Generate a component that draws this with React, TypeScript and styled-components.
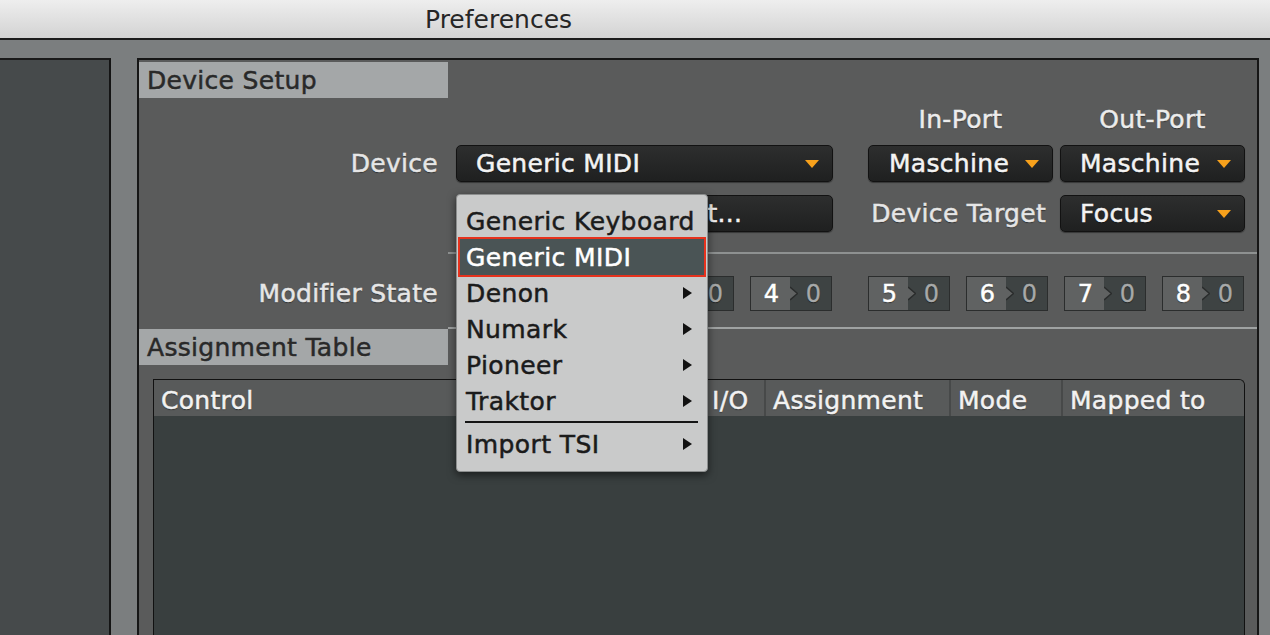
import * as React from 'react'
import styled, { createGlobalStyle } from 'styled-components'

const GlobalStyle = createGlobalStyle`
  html, body {
    margin: 0;
    padding: 0;
    height: 100%;
    overflow: hidden;
    background: #7b7e7f;
  }
  body {
    font-family: "DejaVu Sans", "Liberation Sans", sans-serif;
  }
`;

const MODIFIER_GROUPS = [[1, 2, 3, 4], [5, 6, 7, 8]];
const MENU_ITEMS = [
    { label: 'Generic Keyboard', sub: false },
    { label: 'Generic MIDI', sub: false, active: true },
    { label: 'Denon', sub: true },
    { label: 'Numark', sub: true },
    { label: 'Pioneer', sub: true },
    { label: 'Traktor', sub: true },
];
const COLUMNS = ['Control', 'I/O', 'Assignment', 'Mode', 'Mapped to'];

export default function App() : React.ReactElement {
    return (<>
        <GlobalStyle/>
        <Window>
            <TitleBar>Preferences</TitleBar>
            <Body>
                <Sidebar/>
                <MainPanel>
                    <SectionHead>
                        <Tab>Device Setup</Tab>
                        <HeadFill/>
                    </SectionHead>

                    <SetupGrid>
                        <PortLabel $col={5}>In-Port</PortLabel>
                        <PortLabel $col={7}>Out-Port</PortLabel>

                        <FieldLabel $col={1} $row={2}>Device</FieldLabel>
                        <Dropdown $col={3} $row={2}>
                            <Value>Generic MIDI</Value>
                            <Caret/>
                        </Dropdown>
                        <Dropdown $col={5} $row={2} $pad={20}>
                            <Value>Maschine</Value>
                            <Caret/>
                        </Dropdown>
                        <Dropdown $col={7} $row={2}>
                            <Value>Maschine</Value>
                            <Caret/>
                        </Dropdown>

                        <ButtonPair>
                            <Button>Add...</Button>
                            <Button $width={175} $pad={9}>Edit...</Button>
                        </ButtonPair>
                        <FieldLabel $col={5} $row={3} $inset={7}>Device Target</FieldLabel>
                        <Dropdown $col={7} $row={3}>
                            <Value>Focus</Value>
                            <Caret/>
                        </Dropdown>
                    </SetupGrid>

                    <Rule/>

                    <ModifierRow>
                        <FieldLabel $col={1} $row={1}>Modifier State</FieldLabel>
                        <ModifierGroups>
                            {MODIFIER_GROUPS.map((group, i) => (
                                <ModifierGroup key={i}>
                                    {group.map(n => (
                                        <ModBox key={n}>
                                            <ModKey>{n}</ModKey>
                                            <svg width="8" height="33" viewBox="0 0 8 33">
                                                <polygon points="0,0 0,10 7.5,16.5 0,23 0,33 -1,33 -1,0" fill="#606262"/>
                                                <polyline points="0,10 7.5,16.5 0,23" fill="none" stroke="#2a2c2c" strokeWidth="1.4"/>
                                            </svg>
                                            <ModValue>0</ModValue>
                                        </ModBox>
                                    ))}
                                </ModifierGroup>
                            ))}
                        </ModifierGroups>
                    </ModifierRow>

                    <SectionHead $ruled>
                        <Tab>Assignment Table</Tab>
                        <HeadFill $ruled/>
                    </SectionHead>

                    <Table>
                        <HeaderRow>
                            {COLUMNS.map(c => <HeadCell key={c}>{c}</HeadCell>)}
                        </HeaderRow>
                    </Table>

                    <Menu>
                        {MENU_ITEMS.map(item => (
                            <MenuItem key={item.label} $active={item.active}>
                                <span>{item.label}</span>
                                {item.sub && <SubArrow/>}
                            </MenuItem>
                        ))}
                        <MenuSeparator/>
                        <MenuItem>
                            <span>Import TSI</span>
                            <SubArrow/>
                        </MenuItem>
                    </Menu>
                </MainPanel>
            </Body>
        </Window>
    </>);
}

const Window = styled.div`
    width: 1270px;
    height: 635px;
    display: flex;
    flex-direction: column;
    background: #7b7e7f;
    overflow: hidden;
`;

const TitleBar = styled.div`
    height: 38px;
    flex: none;
    display: flex;
    align-items: center;
    padding-left: 425px;
    background: linear-gradient(#eeeeee, #d3d3d3);
    border-bottom: 2px solid #1d1d1d;
    color: #262626;
    font-size: 25px;
`;

const Body = styled.div`
    flex: 1;
    min-height: 0;
    display: flex;
    gap: 26px;
    padding: 18px 11px 0 0;
`;

const Sidebar = styled.div`
    width: 109px;
    flex: none;
    background: #464a4b;
    border-top: 2px solid #1a1a1a;
    border-right: 2px solid #141414;
`;

const MainPanel = styled.div`
    position: relative;
    flex: 1;
    min-width: 0;
    display: flex;
    flex-direction: column;
    padding-top: 2px;
    background: #5a5b5b;
    border: 2px solid #161616;
    border-bottom: none;
    color: #ececec;
    font-size: 25px;
    letter-spacing: 0.3px;
    -webkit-text-stroke: 0.5px currentColor;
`;

const SectionHead = styled.div<{ $ruled?: boolean }>`
    flex: none;
    display: flex;
    height: ${p => p.$ruled ? 38 : 36}px;
    margin-top: ${p => p.$ruled ? 16 : 0}px;
`;

const Tab = styled.div`
    width: 309px;
    height: 36px;
    align-self: flex-end;
    box-sizing: border-box;
    display: flex;
    align-items: center;
    padding: 1px 0 0 8px;
    background: #a4a7a8;
    color: #292929;
    text-shadow: 0 1px 0 rgba(255,255,255,0.15);
`;

const HeadFill = styled.div<{ $ruled?: boolean }>`
    flex: 1;
    border-top: ${p => p.$ruled ? '2px solid #9fa2a2' : 'none'};
`;

const SetupGrid = styled.div`
    display: grid;
    grid-template-columns: 299px 18px 377px 35px 185px 7px 185px;
    grid-template-rows: 34px 37px 37px;
    row-gap: 13px;
    text-shadow: 0 1px 1px rgba(0,0,0,0.5);
`;

const PortLabel = styled.div<{ $col: number }>`
    grid-column: ${p => p.$col};
    grid-row: 1;
    align-self: end;
    line-height: 24px;
    text-align: center;
`;

const FieldLabel = styled.div<{ $col: number; $row: number; $inset?: number }>`
    grid-column: ${p => p.$col};
    grid-row: ${p => p.$row};
    align-self: center;
    text-align: right;
    white-space: nowrap;
    padding-right: ${p => p.$inset ?? 0}px;
    color: #e6e6e6;
`;

const Dropdown = styled.div<{ $col: number; $row: number; $pad?: number }>`
    grid-column: ${p => p.$col};
    grid-row: ${p => p.$row};
    box-sizing: border-box;
    height: 37px;
    display: flex;
    align-items: center;
    gap: 8px;
    padding: 0 13px 0 ${p => p.$pad ?? 19}px;
    border: 1px solid #121212;
    border-radius: 5px;
    background: linear-gradient(#2d2e2e, #1f2020);
    box-shadow: 0 1px 1px rgba(0,0,0,0.4);
    color: #f3f3f3;
`;

const Value = styled.span`
    flex: 1;
    white-space: nowrap;
    overflow: hidden;
`;

const Caret = styled.span`
    flex: none;
    width: 0;
    height: 0;
    border-left: 7px solid transparent;
    border-right: 7px solid transparent;
    border-top: 8px solid #f7a11c;
`;

const ButtonPair = styled.div`
    grid-column: 3;
    grid-row: 3;
    display: flex;
    gap: 7px;
`;

const Button = styled.div<{ $width?: number; $pad?: number }>`
    box-sizing: border-box;
    height: 37px;
    flex: ${p => p.$width ? `0 0 ${p.$width}px` : '1'};
    display: flex;
    align-items: center;
    padding-left: ${p => p.$pad ?? 13}px;
    border: 1px solid #121212;
    border-radius: 5px;
    background: linear-gradient(#2d2e2e, #1f2020);
    box-shadow: 0 1px 1px rgba(0,0,0,0.4);
    color: #f3f3f3;
`;

const Rule = styled.div`
    height: 2px;
    margin: 20px 0 0 309px;
    background: #8e9191;
`;

const ModifierRow = styled.div`
    display: grid;
    grid-template-columns: 299px auto;
    column-gap: 18px;
    align-items: center;
    margin-top: 22px;
    height: 35px;
    text-shadow: 0 1px 1px rgba(0,0,0,0.5);
`;

const ModifierGroups = styled.div`
    display: flex;
    gap: 36px;
`;

const ModifierGroup = styled.div`
    display: flex;
    gap: 16px;
`;

const ModBox = styled.div`
    width: 82px;
    height: 35px;
    box-sizing: border-box;
    display: flex;
    border: 1px solid #2b2d2d;
    background: #3e4343;
    & svg { flex: none; display: block; }
`;

const ModKey = styled.span`
    width: 37px;
    display: flex;
    align-items: center;
    justify-content: center;
    padding-left: 2px;
    background: #606262;
    color: #ffffff;
    font-size: 24px;
`;

const ModValue = styled.span`
    flex: 1;
    display: flex;
    align-items: center;
    justify-content: center;
    padding-right: 2px;
    color: #a7a9a9;
    font-size: 24px;
    -webkit-text-stroke: 0.3px currentColor;
`;

const Table = styled.div`
    flex: 1;
    margin: 14px 12px 0 14px;
    display: flex;
    flex-direction: column;
    background: #393f3f;
    border: 1px solid #111111;
    border-bottom: none;
    border-top-right-radius: 6px;
    overflow: hidden;
`;

const HeaderRow = styled.div`
    height: 36px;
    flex: none;
    display: grid;
    grid-template-columns: 551px 61px 185px 112px 1fr;
    background: #585a5a;
`;

const HeadCell = styled.div`
    display: flex;
    align-items: center;
    padding: 4px 0 0 7px;
    border-right: 2px solid #474949;
    color: #f2f2f2;
    white-space: nowrap;
    text-shadow: 0 1px 1px rgba(0,0,0,0.5);
    &:last-child { border-right: none; }
`;

const Menu = styled.div`
    position: absolute;
    left: 317px;
    top: 134px;
    z-index: 10;
    width: 252px;
    box-sizing: border-box;
    padding: 8px 3px 9px;
    background: #c9caca;
    border: 1px solid #8c8e8e;
    border-radius: 4px;
    box-shadow: 0 3px 8px rgba(0,0,0,0.55);
    letter-spacing: 0.4px;
`;

const MenuItem = styled.div<{ $active?: boolean }>`
    height: 36px;
    display: flex;
    align-items: center;
    justify-content: space-between;
    padding: 0 12px 0 6px;
    color: ${p => p.$active ? '#ffffff' : '#1b1b1b'};
    background: ${p => p.$active ? '#4a5455' : 'transparent'};
    outline: ${p => p.$active ? '2px solid #e6321d' : 'none'};
    white-space: nowrap;
`;

const SubArrow = styled.span`
    width: 0;
    height: 0;
    border-top: 6px solid transparent;
    border-bottom: 6px solid transparent;
    border-left: 9px solid #111111;
`;

const MenuSeparator = styled.div`
    height: 2px;
    margin: 2px 6px 3px 5px;
    background: #151515;
`;
